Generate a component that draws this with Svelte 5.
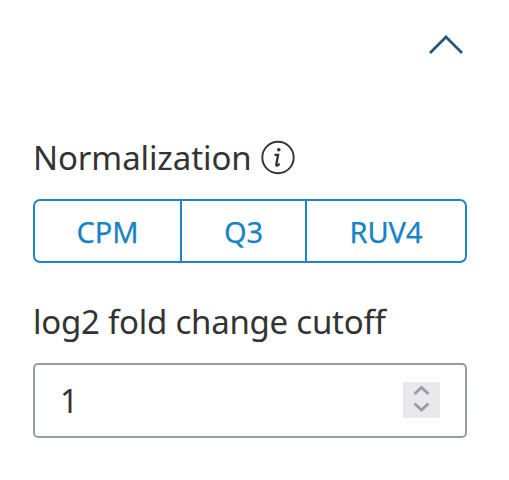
<script>
  const methods = [
    { name: 'CPM', width: 145 },
    { name: 'Q3', width: 125 },
    { name: 'RUV4', width: 160 }
  ];
</script>

<main>
  <header>
    <button class="collapse" aria-label="Collapse">
      <svg width="36" height="22" viewBox="0 0 36 22"><path d="M2 19 L18 3 L34 19" fill="none" stroke="#24587a" stroke-width="2.7" /></svg>
    </button>
  </header>
  <div class="label first">
    <span>Normalization</span>
    <svg width="36" height="36" viewBox="0 0 36 36"><circle cx="18" cy="17.5" r="15.7" fill="none" stroke="#333" stroke-width="1.9" /><circle cx="18.8" cy="9.8" r="1.8" fill="#333" /><path d="M14.5 14.8h3.6l-1.8 9.5q-.2 2 1.4 1.1l2-1.5" fill="none" stroke="#333" stroke-width="2.3" /></svg>
  </div>
  <div class="group">
    {#each methods as m}
      <button style="width: {m.width}px">{m.name}</button>
    {/each}
  </div>
  <div class="label second"><span>log2 fold change cutoff</span></div>
  <div class="field">
    <span>1</span>
    <div class="spin">
      <svg width="37" height="36" viewBox="0 0 37 36"><path d="M11.5 12 L18.5 5.5 L25.5 12 M11.5 21.5 L18.5 28 L25.5 21.5" fill="none" stroke="#9b9ba5" stroke-width="2.8" /></svg>
    </div>
  </div>
</main>

<style>
  :global(body) { background: #fff; }
  main { box-sizing: border-box; width: 509px; height: 480px; padding: 0 42px 0 33px; font-family: "Noto Sans", sans-serif; color: #333; overflow: hidden; }
  header { height: 136px; display: flex; justify-content: flex-end; align-items: flex-start; }
  button { font: inherit; padding: 0; border: 0; background: none; }
  .collapse { margin: 34px 3px 0 0; line-height: 0; }
  svg { display: block; }
  .label { display: flex; align-items: center; font-size: 33px; line-height: 44px; white-space: nowrap; letter-spacing: -0.1px; }
  .first { height: 44px; gap: 8px; }
  .group { box-sizing: border-box; margin-top: 19px; height: 64px; width: 434px; display: flex; border: 2px solid #1d87c6; border-radius: 7px; }
  .group button { box-sizing: border-box; color: #1583c6; font-size: 29px; font-weight: 400; -webkit-text-stroke: 0.25px #1583c6; }
  .group button + button { border-left: 2px solid #1d87c6; }
  .second { margin-top: 37px; height: 44px; letter-spacing: -0.25px; }
  .field { box-sizing: border-box; margin-top: 19px; height: 75px; width: 434px; border: 2px solid #979da6; border-radius: 5px; display: flex; align-items: center; justify-content: space-between; padding: 0 25px; font-size: 32px; }
  .spin { background: #e9e9ed; margin-bottom: 2px; }
</style>
